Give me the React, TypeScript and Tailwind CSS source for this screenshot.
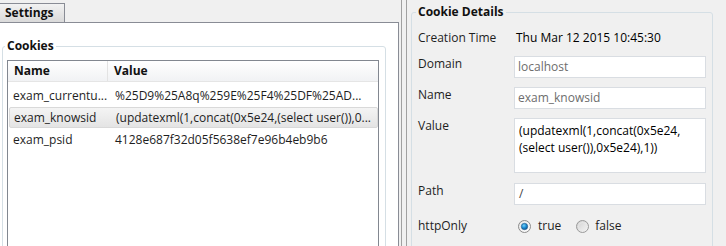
import React from "react";

const font = { fontFamily: '"Open Sans", "Noto Sans", "Liberation Sans", sans-serif' };

function RadioOn() {
  return (
    <svg width="13" height="13" viewBox="0 0 13 13">
      <defs>
        <linearGradient id="rg1" x1="0" y1="0" x2="1" y2="1">
          <stop offset="0" stopColor="#e6e6e6" />
          <stop offset="1" stopColor="#ffffff" />
        </linearGradient>
        <radialGradient id="rg2" cx="0.4" cy="0.35" r="0.7">
          <stop offset="0" stopColor="#7ad0f5" />
          <stop offset="0.5" stopColor="#1c8fd6" />
          <stop offset="1" stopColor="#0a4f8c" />
        </radialGradient>
      </defs>
      <circle cx="6.5" cy="6.5" r="6" fill="url(#rg1)" stroke="#8a8a8a" strokeWidth="1" />
      <circle cx="6.5" cy="6.5" r="3.2" fill="url(#rg2)" stroke="#2a5a8a" strokeWidth="0.6" />
    </svg>
  );
}

function RadioOff() {
  return (
    <svg width="13" height="13" viewBox="0 0 13 13">
      <defs>
        <linearGradient id="rg3" x1="0" y1="0" x2="1" y2="1">
          <stop offset="0" stopColor="#cfcfcf" />
          <stop offset="1" stopColor="#f7f7f7" />
        </linearGradient>
      </defs>
      <circle cx="6.5" cy="6.5" r="6" fill="url(#rg3)" stroke="#9a9a9a" strokeWidth="1" />
      <circle cx="6.5" cy="6.5" r="4" fill="none" stroke="#e8e8e8" strokeWidth="0.8" />
    </svg>
  );
}

export default function App() {
  return (
    <div
      className="w-[726px] h-[246px] bg-[#f0f0f0] flex overflow-hidden text-[12px] text-[#1e1e1e]"
      style={font}
    >
      {/* Left pane */}
      <div className="w-[399px] h-full flex flex-col shrink-0">
        <div className="h-[23px] border-b border-[#898c95] flex shrink-0">
          <div className="mt-[3px] -ml-[1px] h-[19px] w-[66px] border border-b-0 border-[#898c95] bg-gradient-to-b from-[#f2f2f2] to-[#dadada] pl-[5px] font-bold leading-[18px] text-[#111]">
            Settings
          </div>
        </div>
        <div className="flex-1 bg-white border-r border-[#898c95] overflow-hidden">
          <div className="relative ml-[2px] mt-[23px] w-[384px] h-[220px] border border-[#d5dfe5] rounded-[3px]">
            <div className="absolute left-[2px] -top-[9px] px-[2px] bg-white font-bold leading-[16px] text-[#111]">
              Cookies
            </div>
            <div className="ml-[4px] mt-[13px] w-[372px] h-[200px] border border-[#828790] bg-white">
              <div className="h-[21px] flex border-b border-[#e5e5e5] bg-gradient-to-b from-white to-[#f1f2f4] font-bold leading-[20px] text-[#111]">
                <div className="w-[100px] pl-[6px] border-r border-[#e3e3e3]">Name</div>
                <div className="pl-[6px]">Value</div>
              </div>
              <div className="pt-[3px]">
                <div className="h-[22px] flex leading-[21px] whitespace-nowrap overflow-hidden">
                  <div className="w-[100px] pl-[5px] shrink-0">exam_currentu...</div>
                  <div className="pl-[7px]">%25D9%25A8q%259E%25F4%25DF%25AD...</div>
                </div>
                <div className="h-[22px]">
                  <div className="h-[21px] ml-[1px] flex leading-[19px] whitespace-nowrap overflow-hidden border border-[#d9d9d9] rounded-[2px] bg-gradient-to-b from-[#f4f4f4] to-[#e4e4e4]">
                    <div className="w-[100px] pl-[4px] shrink-0">exam_knowsid</div>
                    <div className="pl-[6px]">(updatexml(1,concat(0x5e24,(select user()),0...</div>
                  </div>
                </div>
                <div className="h-[22px] flex leading-[21px] whitespace-nowrap overflow-hidden">
                  <div className="w-[100px] pl-[5px] shrink-0">exam_psid</div>
                  <div className="pl-[7px]">4128e687f32d05f5638ef7e96b4eb9b6</div>
                </div>
              </div>
            </div>
          </div>
        </div>
      </div>

      {/* Splitter */}
      <div className="w-[8px] h-full flex shrink-0">
        <div className="w-[2px]" />
        <div className="w-[1px] bg-[#a0a0a0]" />
        <div className="w-[4px]" />
        <div className="w-[1px] bg-[#a0a0a0]" />
      </div>

      {/* Right pane */}
      <div className="flex-1 h-full">
        <div className="relative ml-[4px] mt-[12px] w-[302px] h-[250px] border border-[#d5dfe5] rounded-[3px]">
          <div className="absolute left-[4px] -top-[9px] px-[2px] bg-[#f0f0f0] font-bold leading-[16px] text-[#111]">
            Cookie Details
          </div>
          <div className="pl-[6px] pt-[17px]">
            <div className="flex leading-[16px]">
              <div className="w-[96px] shrink-0">Creation Time</div>
              <div className="pl-[2px] text-black">Thu Mar 12 2015 10:45:30</div>
            </div>
            <div className="flex mt-[10px]">
              <div className="w-[96px] shrink-0 leading-[16px]">Domain</div>
              <div className="w-[192px] h-[22px] border border-[#d9dde2] bg-white pl-[3px] leading-[20px] text-[#6d6d6d]">
                localhost
              </div>
            </div>
            <div className="flex mt-[9px]">
              <div className="w-[96px] shrink-0 leading-[16px]">Name</div>
              <div className="w-[192px] h-[22px] border border-[#d9dde2] bg-white pl-[3px] leading-[20px] text-[#6d6d6d]">
                exam_knowsid
              </div>
            </div>
            <div className="flex mt-[9px]">
              <div className="w-[96px] shrink-0 leading-[16px]">Value</div>
              <div className="w-[192px] h-[55px] border border-[#d9dde2] bg-white pl-[4px] pt-[3px] leading-[17px] text-black whitespace-nowrap">
                <div>(updatexml(1,concat(0x5e24,</div>
                <div>(select user()),0x5e24),1))</div>
              </div>
            </div>
            <div className="flex mt-[10px]">
              <div className="w-[96px] shrink-0 leading-[16px]">Path</div>
              <div className="w-[192px] h-[22px] border border-[#d9dde2] bg-white pl-[4px] leading-[20px] text-[#444]">
                /
              </div>
            </div>
            <div className="flex mt-[13px] items-center leading-[16px]">
              <div className="w-[100px] shrink-0">httpOnly</div>
              <RadioOn />
              <span className="ml-[7px]">true</span>
              <span className="ml-[15px] flex"><RadioOff /></span>
              <span className="ml-[6px]">false</span>
            </div>
          </div>
        </div>
      </div>
    </div>
  );
}
